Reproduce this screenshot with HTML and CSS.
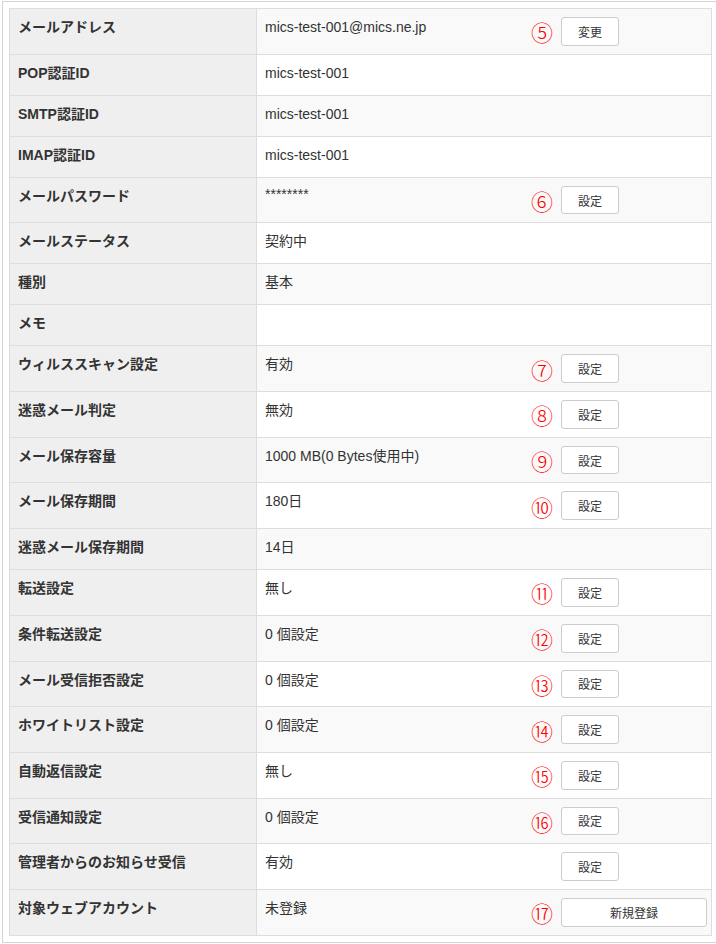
FILE: index.html
```html
<!DOCTYPE html>
<html lang="ja">
<head>
<meta charset="utf-8">
<title>メールアカウント情報</title>
<link rel="stylesheet" href="styles.css">
</head>
<body>
<div class="frame">
  <div class="table">
    <div class="row btn-row">
      <div class="label">メールアドレス</div>
      <div class="value">mics-test-001@mics.ne.jp</div>
      <div class="action"><span class="num">⑤</span><button class="btn">変更</button></div>
    </div>
    <div class="row">
      <div class="label">POP認証ID</div>
      <div class="value">mics-test-001</div>
      <div class="action"></div>
    </div>
    <div class="row">
      <div class="label">SMTP認証ID</div>
      <div class="value">mics-test-001</div>
      <div class="action"></div>
    </div>
    <div class="row">
      <div class="label">IMAP認証ID</div>
      <div class="value">mics-test-001</div>
      <div class="action"></div>
    </div>
    <div class="row btn-row">
      <div class="label">メールパスワード</div>
      <div class="value pw">********</div>
      <div class="action"><span class="num">⑥</span><button class="btn">設定</button></div>
    </div>
    <div class="row">
      <div class="label">メールステータス</div>
      <div class="value">契約中</div>
      <div class="action"></div>
    </div>
    <div class="row">
      <div class="label">種別</div>
      <div class="value">基本</div>
      <div class="action"></div>
    </div>
    <div class="row">
      <div class="label">メモ</div>
      <div class="value"></div>
      <div class="action"></div>
    </div>
    <div class="row btn-row">
      <div class="label">ウィルススキャン設定</div>
      <div class="value">有効</div>
      <div class="action"><span class="num">⑦</span><button class="btn">設定</button></div>
    </div>
    <div class="row btn-row">
      <div class="label">迷惑メール判定</div>
      <div class="value">無効</div>
      <div class="action"><span class="num">⑧</span><button class="btn">設定</button></div>
    </div>
    <div class="row btn-row">
      <div class="label">メール保存容量</div>
      <div class="value">1000 MB(0 Bytes使用中)</div>
      <div class="action"><span class="num">⑨</span><button class="btn">設定</button></div>
    </div>
    <div class="row btn-row">
      <div class="label">メール保存期間</div>
      <div class="value">180日</div>
      <div class="action"><span class="num">⑩</span><button class="btn">設定</button></div>
    </div>
    <div class="row">
      <div class="label">迷惑メール保存期間</div>
      <div class="value">14日</div>
      <div class="action"></div>
    </div>
    <div class="row btn-row">
      <div class="label">転送設定</div>
      <div class="value">無し</div>
      <div class="action"><span class="num">⑪</span><button class="btn">設定</button></div>
    </div>
    <div class="row btn-row">
      <div class="label">条件転送設定</div>
      <div class="value">0 個設定</div>
      <div class="action"><span class="num">⑫</span><button class="btn">設定</button></div>
    </div>
    <div class="row btn-row">
      <div class="label">メール受信拒否設定</div>
      <div class="value">0 個設定</div>
      <div class="action"><span class="num">⑬</span><button class="btn">設定</button></div>
    </div>
    <div class="row btn-row">
      <div class="label">ホワイトリスト設定</div>
      <div class="value">0 個設定</div>
      <div class="action"><span class="num">⑭</span><button class="btn">設定</button></div>
    </div>
    <div class="row btn-row">
      <div class="label">自動返信設定</div>
      <div class="value">無し</div>
      <div class="action"><span class="num">⑮</span><button class="btn">設定</button></div>
    </div>
    <div class="row btn-row">
      <div class="label">受信通知設定</div>
      <div class="value">0 個設定</div>
      <div class="action"><span class="num">⑯</span><button class="btn">設定</button></div>
    </div>
    <div class="row btn-row">
      <div class="label">管理者からのお知らせ受信</div>
      <div class="value">有効</div>
      <div class="action"><span class="num"></span><button class="btn">設定</button></div>
    </div>
    <div class="row btn-row">
      <div class="label">対象ウェブアカウント</div>
      <div class="value">未登録</div>
      <div class="action"><span class="num">⑰</span><button class="btn btn-wide">新規登録</button></div>
    </div>
  </div>
</div>
</body>
</html>
```

FILE: styles.css
```css
html, body {
  margin: 0;
  padding: 0;
  background: #ffffff;
}

body {
  font-family: "Liberation Sans", "Noto Sans CJK JP", sans-serif;
  font-size: 14px;
  color: #333333;
}

.frame {
  margin: 1px 1px 0 2px;
  width: 711px;
  border: 1px solid #d4d4d4;
  padding: 6px 0 6px 6px;
  box-sizing: content-box;
}

.table {
  width: 703px;
  border: 1px solid #dddddd;
  border-bottom: none;
  box-sizing: border-box;
}

.row {
  display: grid;
  grid-template-columns: 247px 1fr 190px;
  border-bottom: 1px solid #dddddd;
  background: #ffffff;
}

.row:nth-child(odd) {
  background: #f9f9f9;
}

.label {
  background: #efefef;
  border-right: 1px solid #dddddd;
  padding: 8px 8px 12px;
  line-height: 20px;
  font-weight: bold;
  color: #333333;
}

.value {
  padding: 8px 8px 12px;
  line-height: 20px;
  color: #333333;
}

.value.pw {
  line-height: 16px;
}

.action {
  display: flex;
  align-items: center;
  padding: 0 4px 0 0;
}

.btn-row .action {
  padding: 8px 4px 8px 0;
}

.num {
  width: 32px;
  margin-right: 8px;
  text-align: right;
  font-family: "Noto Sans CJK JP", sans-serif;
  font-size: 22px;
  font-weight: 300;
  line-height: 20px;
  color: #ff0000;
}

.btn {
  width: 58px;
  height: 28.7px;
  padding: 0;
  margin: 0;
  background: #ffffff;
  border: 1px solid #cccccc;
  border-radius: 3px;
  font-family: "Noto Sans CJK JP", sans-serif;
  font-size: 12px;
  color: #333333;
  box-sizing: border-box;
}

.btn-wide {
  width: 146px;
}
```
